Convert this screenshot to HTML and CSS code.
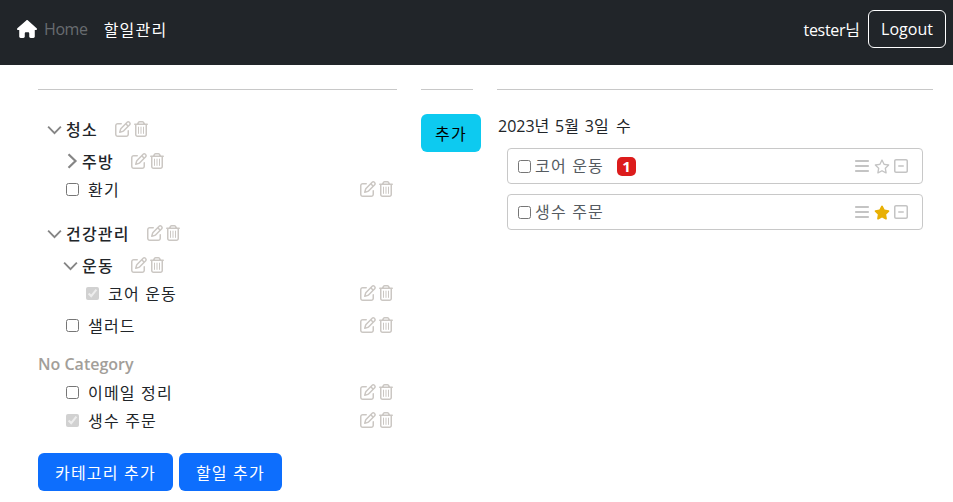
FILE: index.html
```html
<!DOCTYPE html>
<html lang="ko">
<head>
    <meta charset="UTF-8">
    <meta name="viewport" content="width=device-width, initial-scale=1.0">
    <title>할일관리</title>
    <link rel="stylesheet" href="styles.css">
</head>
<body>
    <svg class="icon-defs" aria-hidden="true">
        <symbol id="i-home" viewBox="0 0 576 512"><path d="M575.8 255.5c0 18-15 32.1-32 32.1h-32l.7 160.2c0 2.7-.2 5.4-.5 8.1V472c0 22.1-17.9 40-40 40H456c-1.1 0-2.2 0-3.3-.1c-1.4 .1-2.8 .1-4.2 .1H416 392c-22.1 0-40-17.9-40-40V448 384c0-17.7-14.3-32-32-32H256c-17.7 0-32 14.3-32 32v64 24c0 22.1-17.9 40-40 40H160 128.1c-1.5 0-3-.1-4.5-.2c-1.2 .1-2.4 .2-3.6 .2H104c-22.1 0-40-17.9-40-40V360c0-.9 0-1.9 .1-2.8V287.6H32c-18 0-32-14-32-32.1c0-9 3-17 10-24L266.4 8c7-7 15-8 22-8s15 2 21 7L564.8 231.5c8 7 12 15 11 24z"/></symbol>
        <symbol id="i-edit" viewBox="0 0 512 512"><path d="M441 58.9L453.1 71c9.4 9.4 9.4 24.6 0 33.9L424 134.1 377.9 88 407 58.9c9.4-9.4 24.6-9.4 33.9 0zM209.8 256.2L344 121.9 390.1 168 255.8 302.2c-2.9 2.9-6.5 5-10.4 6.1l-58.5 16.7 16.7-58.5c1.1-3.9 3.2-7.5 6.1-10.4zM373.1 25L175.8 222.2c-8.7 8.7-15 19.4-18.3 31.1l-28.6 100c-2.4 8.4-.1 17.4 6.1 23.6s15.2 8.5 23.6 6.1l100-28.6c11.8-3.4 22.5-9.7 31.1-18.3L487 138.9c28.1-28.1 28.1-73.7 0-101.8L474.9 25C446.8-3.1 401.2-3.1 373.1 25zM88 64C39.4 64 0 103.4 0 152V424c0 48.6 39.4 88 88 88H360c48.6 0 88-39.4 88-88V312c0-13.3-10.7-24-24-24s-24 10.7-24 24V424c0 22.1-17.9 40-40 40H88c-22.1 0-40-17.9-40-40V152c0-22.1 17.9-40 40-40H200c13.3 0 24-10.7 24-24s-10.7-24-24-24H88z"/></symbol>
        <symbol id="i-trash" viewBox="0 0 448 512"><path d="M170.5 51.6L151.5 80h145l-19-28.4c-1.5-2.2-4-3.6-6.7-3.6H177.1c-2.7 0-5.2 1.3-6.7 3.6zm147-26.6L354.2 80H368h48 8c13.3 0 24 10.7 24 24s-10.7 24-24 24h-8V432c0 44.2-35.8 80-80 80H112c-44.2 0-80-35.8-80-80V128H24c-13.3 0-24-10.7-24-24S10.7 80 24 80h8H80 93.8l36.7-55.1C140.9 9.4 158.4 0 177.1 0h93.7c18.7 0 36.2 9.4 46.6 24.9zM80 128V432c0 17.7 14.3 32 32 32H336c17.7 0 32-14.3 32-32V128H80zm80 64V400c0 8.8-7.2 16-16 16s-16-7.2-16-16V192c0-8.8 7.2-16 16-16s16 7.2 16 16zm80 0V400c0 8.8-7.2 16-16 16s-16-7.2-16-16V192c0-8.8 7.2-16 16-16s16 7.2 16 16zm80 0V400c0 8.8-7.2 16-16 16s-16-7.2-16-16V192c0-8.8 7.2-16 16-16s16 7.2 16 16z"/></symbol>
        <symbol id="i-bars" viewBox="0 0 448 512"><path d="M0 96C0 78.3 14.3 64 32 64H416c17.7 0 32 14.3 32 32s-14.3 32-32 32H32C14.3 128 0 113.7 0 96zM0 256c0-17.7 14.3-32 32-32H416c17.7 0 32 14.3 32 32s-14.3 32-32 32H32c-17.7 0-32-14.3-32-32zM448 416c0 17.7-14.3 32-32 32H32c-17.7 0-32-14.3-32-32s14.3-32 32-32H416c17.7 0 32 14.3 32 32z"/></symbol>
        <symbol id="i-star" viewBox="0 0 576 512"><path d="M287.9 0c9.2 0 17.6 5.2 21.6 13.5l68.6 141.3 153.2 22.6c9 1.3 16.5 7.6 19.3 16.3s.5 18.1-5.9 24.5L433.6 328.4l26.2 155.6c1.5 9-2.2 18.1-9.6 23.5s-17.3 6-25.3 1.7l-137-73.2L151 509.1c-8.1 4.3-17.9 3.7-25.3-1.7s-11.2-14.5-9.7-23.5l26.2-155.6L31.1 218.2c-6.5-6.4-8.7-15.9-5.9-24.5s10.3-14.9 19.3-16.3l153.2-22.6L266.3 13.5C270.4 5.2 278.7 0 287.9 0zm0 79L235.4 187.2c-3.5 7.1-10.2 12.1-18.1 13.3L99 217.9 184.9 303c5.5 5.5 8.1 13.3 6.8 21L171.4 443.7l105.2-56.2c7.1-3.8 15.6-3.8 22.6 0l105.2 56.2L384.2 324.1c-1.3-7.7 1.2-15.5 6.8-21l85.9-85.1L358.6 200.5c-7.8-1.2-14.6-6.1-18.1-13.3L287.9 79z"/></symbol>
        <symbol id="i-star-fill" viewBox="0 0 576 512"><path d="M316.9 18C311.6 7 300.4 0 288.1 0s-23.4 7-28.8 18L195 150.3 51.4 171.5c-12 1.8-22 10.2-25.7 21.7s-.7 24.2 7.9 32.7L137.8 329 113.2 474.7c-2 12 3 24.2 12.9 31.3s23 8 33.8 2.3l128.3-68.5 128.3 68.5c10.8 5.7 23.9 4.9 33.8-2.3s14.9-19.3 12.9-31.3L438.5 329 542.7 225.9c8.6-8.5 11.7-21.2 7.9-32.7s-13.7-19.9-25.7-21.7L381.2 150.3 316.9 18z"/></symbol>
        <symbol id="i-minus" viewBox="0 0 448 512"><path d="M64 80c-8.8 0-16 7.2-16 16V416c0 8.8 7.2 16 16 16H384c8.8 0 16-7.2 16-16V96c0-8.8-7.2-16-16-16H64zM0 96C0 60.7 28.7 32 64 32H384c35.3 0 64 28.7 64 64V416c0 35.3-28.7 64-64 64H64c-35.3 0-64-28.7-64-64V96zM152 232H296c13.3 0 24 10.7 24 24s-10.7 24-24 24H152c-13.3 0-24-10.7-24-24s10.7-24 24-24z"/></symbol>
        <symbol id="i-down" viewBox="0 0 16 16"><path fill="none" stroke="currentColor" stroke-width="2" d="M1.2 5l6.8 6.8L14.8 5"/></symbol>
        <symbol id="i-right" viewBox="0 0 16 16"><path fill="none" stroke="currentColor" stroke-width="2.2" d="M4.5 1.2L11.5 8l-7 6.8"/></symbol>
    </svg>

    <nav class="navbar">
        <svg class="home-icon"><use href="#i-home"/></svg>
        <a class="nav-link muted">Home</a>
        <a class="nav-link ko">할일관리</a>
        <span class="user">tester<span class="ko">님</span></span>
        <button class="btn-logout">Logout</button>
    </nav>

    <main class="content">
        <section class="col-tree">
            <hr>
            <div class="tree">
                <div class="cat top">
                    <svg class="chev"><use href="#i-down"/></svg>
                    <b class="ko">청소</b>
                    <span class="tools"><svg class="ic-edit"><use href="#i-edit"/></svg><svg class="ic-trash"><use href="#i-trash"/></svg></span>
                </div>
                <div class="cat sub">
                    <svg class="chev small"><use href="#i-right"/></svg>
                    <b class="ko">주방</b>
                    <span class="tools"><svg class="ic-edit"><use href="#i-edit"/></svg><svg class="ic-trash"><use href="#i-trash"/></svg></span>
                </div>
                <label class="todo"><input type="checkbox"><span class="ko">환기</span>
                    <span class="tools end"><svg class="ic-edit"><use href="#i-edit"/></svg><svg class="ic-trash"><use href="#i-trash"/></svg></span>
                </label>

                <div class="cat top gap-top">
                    <svg class="chev"><use href="#i-down"/></svg>
                    <b class="ko">건강관리</b>
                    <span class="tools"><svg class="ic-edit"><use href="#i-edit"/></svg><svg class="ic-trash"><use href="#i-trash"/></svg></span>
                </div>
                <div class="cat sub">
                    <svg class="chev sub-down"><use href="#i-down"/></svg>
                    <b class="ko">운동</b>
                    <span class="tools"><svg class="ic-edit"><use href="#i-edit"/></svg><svg class="ic-trash"><use href="#i-trash"/></svg></span>
                </div>
                <label class="todo nested"><input type="checkbox" checked disabled><span class="ko">코어 운동</span>
                    <span class="tools end"><svg class="ic-edit"><use href="#i-edit"/></svg><svg class="ic-trash"><use href="#i-trash"/></svg></span>
                </label>
                <label class="todo after-nested"><input type="checkbox"><span class="ko">샐러드</span>
                    <span class="tools end"><svg class="ic-edit"><use href="#i-edit"/></svg><svg class="ic-trash"><use href="#i-trash"/></svg></span>
                </label>

                <div class="no-cat">No Category</div>
                <label class="todo"><input type="checkbox"><span class="ko">이메일 정리</span>
                    <span class="tools end"><svg class="ic-edit"><use href="#i-edit"/></svg><svg class="ic-trash"><use href="#i-trash"/></svg></span>
                </label>
                <label class="todo"><input type="checkbox" checked disabled><span class="ko">생수 주문</span>
                    <span class="tools end"><svg class="ic-edit"><use href="#i-edit"/></svg><svg class="ic-trash"><use href="#i-trash"/></svg></span>
                </label>
            </div>
            <div class="actions">
                <button class="btn-primary ko">카테고리 추가</button>
                <button class="btn-primary ko">할일 추가</button>
            </div>
        </section>

        <section class="col-add">
            <hr>
            <button class="btn-add ko">추가</button>
        </section>

        <section class="col-day">
            <hr>
            <div class="date">2023<span class="ko">년</span> 5<span class="ko">월</span> 3<span class="ko">일 수</span></div>
            <div class="card">
                <input type="checkbox"><span class="card-title ko">코어 운동</span>
                <span class="badge">1</span>
                <span class="card-tools">
                    <svg class="ic-bars"><use href="#i-bars"/></svg>
                    <svg class="ic-star"><use href="#i-star"/></svg>
                    <svg class="ic-minus"><use href="#i-minus"/></svg>
                </span>
            </div>
            <div class="card">
                <input type="checkbox"><span class="card-title ko">생수 주문</span>
                <span class="card-tools">
                    <svg class="ic-bars"><use href="#i-bars"/></svg>
                    <svg class="ic-star on"><use href="#i-star-fill"/></svg>
                    <svg class="ic-minus"><use href="#i-minus"/></svg>
                </span>
            </div>
        </section>
    </main>
</body>
</html>
```

FILE: styles.css
```css
* {
    box-sizing: border-box;
}
body {
    margin: 0;
    font-family: "Open Sans", "Noto Sans CJK KR", sans-serif;
    font-size: 16px;
    color: #212529;
    background-color: #fff;
}
.icon-defs {
    display: none;
}
svg {
    display: block;
    fill: currentColor;
}
.ko {
    letter-spacing: 1.2px;
}
button {
    font: inherit;
    cursor: pointer;
}

/* navbar */
.navbar {
    display: flex;
    align-items: center;
    height: 65px;
    padding: 0 7px 7px 17px;
    background-color: #212529;
    color: #fff;
}
.home-icon {
    width: 20px;
    height: 18px;
    color: #fff;
}
.nav-link {
    margin-left: 7px;
}
.nav-link.muted {
    color: #686c70;
    margin-right: 16px;
    letter-spacing: -0.4px;
}
.nav-link.ko {
    margin-left: 0;
}
.user {
    margin-left: auto;
    margin-right: 8px;
    letter-spacing: -0.3px;
}
.user .ko {
    letter-spacing: 0;
}
.btn-logout {
    width: 78px;
    height: 38px;
    border: 1px solid #fff;
    border-radius: 6px;
    background: transparent;
    color: #fff;
    padding: 0;
}

/* columns */
.content {
    display: flex;
    gap: 24px;
    padding: 0 20px 0 38px;
}
hr {
    height: 1px;
    margin: 24px 0;
    border: 0;
    background-color: #c8c8c8;
}
.col-tree {
    width: 359px;
}
.col-add {
    width: 52px;
}
.col-day {
    flex: 1;
}

/* tree */
.tree {
    display: flex;
    flex-direction: column;
    margin-top: -2px;
}
.cat {
    display: flex;
    align-items: center;
}
.cat b {
    font-weight: 500;
}
.cat.top {
    padding-left: 9px;
    height: 32px;
    margin-top: 1px;
}
.cat.sub {
    height: 32px;
}
.cat.gap-top {
    margin-top: 14px;
}
.chev {
    width: 15px;
    height: 15px;
    margin-right: 4px;
    color: #858585;
}
.chev.small {
    width: 16px;
    height: 16px;
    margin-left: 26px;
    margin-right: 2px;
}
.chev.sub-down {
    margin-left: 25px;
    margin-right: 4px;
}
.cat.sub + .todo {
    margin-top: -2px;
}
.tools {
    display: flex;
    align-items: center;
    gap: 3px;
    margin-left: 17px;
    color: #cbc7c3;
}
.tools.end {
    margin-left: auto;
    margin-right: 4px;
}
.ic-edit {
    width: 16px;
    height: 16px;
}
.ic-trash {
    width: 14px;
    height: 16px;
}
.todo {
    display: flex;
    align-items: center;
    height: 28px;
    padding-left: 28px;
}
.todo input {
    width: 13px;
    height: 13px;
    margin: 0 9px 0 0;
}
.todo.nested {
    padding-left: 48px;
}
.todo.after-nested {
    margin-top: 4px;
}
.no-cat {
    margin-top: 11px;
    height: 28px;
    line-height: 28px;
    font-weight: 600;
    color: #a29e99;
}
.actions {
    display: flex;
    gap: 6px;
    margin-top: 19px;
}
.btn-primary {
    height: 38px;
    padding: 0 17px;
    border: 0;
    border-radius: 6px;
    background-color: #0d6efd;
    color: #fff;
}

/* add */
.btn-add {
    width: 60px;
    height: 38px;
    padding: 0;
    border: 0;
    border-radius: 6px;
    background-color: #0dcaf0;
    color: #000;
}

/* day */
.date {
    height: 24px;
    line-height: 24px;
    margin-bottom: 10px;
    padding-left: 1px;
}
.date .ko {
    letter-spacing: 1.6px;
}
.card {
    display: flex;
    align-items: center;
    width: 416px;
    height: 36px;
    margin: 0 0 10px 10px;
    padding: 0 14px 0 10px;
    border: 1px solid #c8c8c8;
    border-radius: 4px;
}
.card input {
    width: 13px;
    height: 13px;
    margin: 0 4px 0 0;
}
.card-title {
    color: #555b61;
    margin-top: -2px;
}
.badge {
    width: 19px;
    height: 19px;
    margin-left: 13px;
    border-radius: 5px;
    background-color: #dc1c1c;
    color: #fff;
    font-size: 15px;
    font-weight: 700;
    line-height: 19px;
    text-align: center;
}
.card-tools {
    display: flex;
    align-items: center;
    margin-left: auto;
    color: #c4c4c4;
}
.ic-bars {
    width: 14px;
    height: 16px;
    margin-right: 5px;
}
.ic-star {
    width: 16px;
    height: 15px;
    margin-right: 4px;
}
.ic-star.on {
    color: #e8b004;
}
.ic-minus {
    width: 14px;
    height: 16px;
}
```
